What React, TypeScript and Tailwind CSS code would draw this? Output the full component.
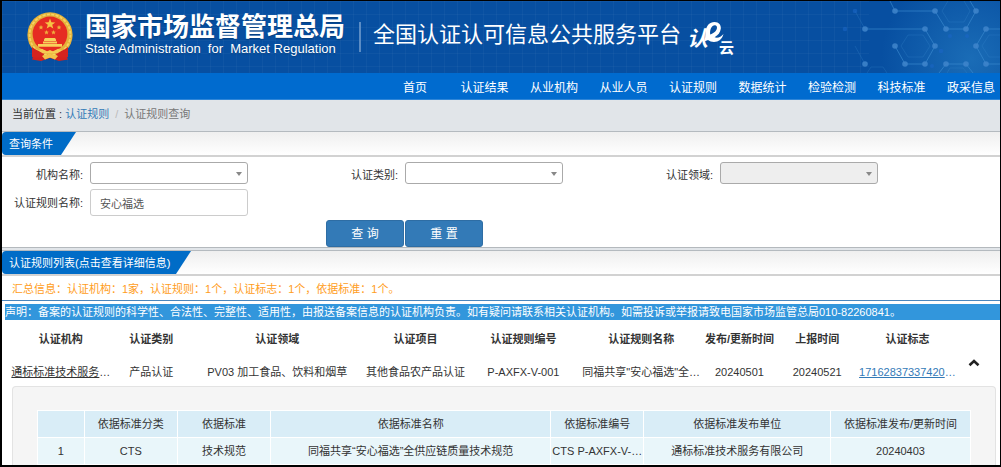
import React, { useState } from "react";

const NAV = ["首页", "认证结果", "从业机构", "从业人员", "认证规则", "数据统计", "检验检测", "科技标准", "政采信息"];

function Emblem() {
  return (
    <svg viewBox="0 0 46 50" className="h-[50px] w-[46px] shrink-0" role="img" aria-label="国徽">
      <path d="M6 31 C4 38 8 43 5 47.5 L14 49 L23 46 L32 49 L41 47.5 C38 43 42 38 40 31Z" fill="#d3211d" />
      <circle cx="23" cy="22.8" r="22.6" fill="#e5b13a" />
      <circle cx="23" cy="22.8" r="20.4" fill="none" stroke="#f6d362" strokeWidth="1.8" strokeDasharray="3 1.4" />
      <circle cx="23" cy="22" r="17.4" fill="#e62c22" />
      <path d="M23 6.5 L24.4 10.3 L28.3 10.4 L25.2 12.8 L26.3 16.6 L23 14.4 L19.7 16.6 L20.8 12.8 L17.7 10.4 L21.6 10.3Z" fill="#f6c445" />
      <g fill="#f0ae3c">
        <path d="M14 13l.7 1.6 1.6.1-1.2 1.1.4 1.7-1.5-.9-1.5.9.4-1.7-1.2-1.1 1.6-.1z" />
        <path d="M32 13l.7 1.6 1.6.1-1.2 1.1.4 1.7-1.5-.9-1.5.9.4-1.7-1.2-1.1 1.6-.1z" />
        <path d="M19.5 18l.7 1.6 1.6.1-1.2 1.1.4 1.7-1.5-.9-1.5.9.4-1.7-1.2-1.1 1.6-.1z" />
        <path d="M26.5 18l.7 1.6 1.6.1-1.2 1.1.4 1.7-1.5-.9-1.5.9.4-1.7-1.2-1.1 1.6-.1z" />
      </g>
      <path d="M17 27.5 L18 26 H28 L29 27.5 V29 H17Z M16 29.6 H30 V31.4 H16Z M11 32 H35 V34.8 H11Z" fill="#f8d25a" />
      <path d="M5 35 C10 39 14 40 18 40 C17 45 11 47 5 45Z M41 35 C36 39 32 40 28 40 C29 45 35 47 41 45Z" fill="#d5241f" />
      <path d="M11 38.5 L15 36.8 L20 39.5 L23 38 L26 39.5 L31 36.8 L35 38.5 L30 41.5 H16Z" fill="#f4cb52" />
      <path d="M15 44 L23 42 L31 44 L28 47.5 L23 45.5 L18 47.5Z" fill="#f2c24a" />
    </svg>
  );
}

function CloudLogo() {
  return (
    <svg viewBox="0 0 50 44" className="h-11 w-[50px] shrink-0" role="img" aria-label="认e云" fill="#fff">
      <text x="0" y="31" fontSize="21" fontWeight="700" fontStyle="italic" fontFamily="Noto Sans CJK SC">认</text>
      <path
        transform="translate(0 4)"
        fillRule="evenodd"
        d="M17 22.5 C18.5 19.5 18 17 18.5 13 C19.3 6.5 22.5 3 27.5 3 C32 3 34.2 6 33.8 9.8 C33.4 13.5 31 16.3 27.6 18.3 C30.5 19.3 34 18.3 36.5 15 C35.2 20.2 31.5 23 27 23 C24.6 23 22.6 22.2 21 21 C19.8 21.6 18.4 22.2 17 22.5Z M27.8 6.2 C24.6 6.5 22.6 10.2 23.2 15.6 C27 14.4 30 11.5 30 8.6 C30 7 29.2 6.1 27.8 6.2Z"
      />
      <text x="32" y="38" fontSize="15" fontWeight="700" fontFamily="Noto Sans CJK SC">云</text>
    </svg>
  );
}

const DOTS: [number, number][] = [
  [146, 10], [186, 10], [227, 10], [116, 28], [176, 28], [197, 28], [217, 28], [237, 28],
  [146, 45], [186, 45], [227, 45], [116, 63], [156, 63], [176, 63], [197, 63], [217, 63], [237, 63],
];

function HeaderArt() {
  return (
    <svg viewBox="0 0 251 72" className="absolute right-0 top-0 h-full w-[251px]" aria-hidden="true">
      <defs>
        <radialGradient id="glow" cx="222" cy="58" r="90" gradientUnits="userSpaceOnUse">
          <stop offset="0" stopColor="#2a84c8" stopOpacity=".55" />
          <stop offset="1" stopColor="#2a84c8" stopOpacity="0" />
        </radialGradient>
      </defs>
      <rect x="120" width="131" height="72" fill="#074fa1" />
      <rect width="251" height="72" fill="url(#glow)" />
      <g fill="none" stroke="#3a8ad0" strokeOpacity=".65">
        <path d="M141 0 L146 10 H186 L197 28 H217 L227 10 L221 0" />
        <path d="M116 28 H176 L186 45 L176 63 H156 L146 45" />
        <path d="M251 28 H237 L227 45 L237 63 H251 M190 72 L197 63 H217 L224 72" />
      </g>
      <g fill="none" stroke="#3a8ad0" strokeOpacity=".25">
        <path d="M106 10 L116 28 M106 45 L116 63 M159 34 H174 L181 45 L174 56 H159 L152 45Z M199 0 L193 10 L200 21 H215 L221 10 L215 0 M251 34 H240 L233 45 L240 56 H251 M118 72 L122 66 H134 L138 72 M198 72 L201 67 H214 L218 72" />
      </g>
      <g fill="#3f85cb" fillOpacity=".85">
        {DOTS.map(([x, y]) => <circle key={`${x}-${y}`} cx={x} cy={y} r="2.8" />)}
      </g>
      <g fill="#1b66c4" fillOpacity=".6">
        <circle cx="106" cy="10" r="2.3" /><circle cx="96" cy="28" r="2.3" /><circle cx="192" cy="50" r="2.3" />
        <circle cx="201" cy="35" r="2" /><circle cx="218" cy="35" r="2" /><circle cx="183" cy="65" r="2" />
      </g>
    </svg>
  );
}

function SectionBar({ title, tab }: { title: string; tab: string }) {
  return (
    <div className="border-b-2 border-[#d2d2d2] bg-linear-to-b from-[#efefef] to-white">
      <h2 className={`${tab} h-[23px] rounded-l bg-[#006cc7] pl-[7px] leading-6 text-white [clip-path:polygon(0_0,100%_0,calc(100%-15px)_100%,0_100%)]`}>
        {title}
      </h2>
    </div>
  );
}

function SelectField({ id, label, disabled }: { id: string; label: string; disabled?: boolean }) {
  return (
    <div className="flex items-center">
      <label htmlFor={id} className="w-[81px] shrink-0 pt-1 text-right">{label}</label>
      <div className="relative ml-[7px] w-1/2">
        <select id={id} disabled={disabled} className="block h-[22px] w-full appearance-none rounded-[3px] border border-[#aaa] bg-white disabled:bg-[#eee]">
          <option></option>
        </select>
        <svg viewBox="0 0 6 4" className="pointer-events-none absolute right-1.5 top-[10px] h-1 w-1.5" aria-hidden="true">
          <path d="M0 0H6L3 4Z" fill="#888" />
        </svg>
      </div>
    </div>
  );
}

const STD_HEAD: [string, string][] = [
  ["", "w-[5%]"], ["依据标准分类", "w-[10%]"], ["依据标准", "w-[10%]"], ["依据标准名称", "w-[30%]"],
  ["依据标准编号", "w-[10%]"], ["依据标准发布单位", "w-[20%]"], ["依据标准发布/更新时间", "w-[15%]"],
];
const STD_ROW = ["1", "CTS", "技术规范", "同福共享“安心福选”全供应链质量技术规范", "CTS P-AXFX-V-…", "通标标准技术服务有限公司", "20240403"];

const RULE_HEAD: [string, string][] = [
  ["认证机构", "w-[11.5%] pl-2"], ["认证类别", "w-[8.3%]"], ["认证领域", "w-[18.1%]"], ["认证项目", "w-[10.9%]"],
  ["认证规则编号", "w-[11.7%]"], ["认证规则名称", "w-[13%]"], ["发布/更新时间", "w-[7.6%]"],
  ["上报时间", "w-[8.7%]"], ["认证标志", "w-[10.2%]"],
];

export default function App() {
  const [name, setName] = useState("安心福选");
  const [open, setOpen] = useState(true);
  return (
    <div className="overflow-hidden border-2 border-r border-t border-black bg-white font-['Liberation_Sans','Noto_Sans_CJK_SC',sans-serif] text-[11px] leading-4 text-[#333]">
      <header className="relative bg-[#074fa1] bg-[linear-gradient(#ffffff08_1px,transparent_1px),linear-gradient(90deg,#ffffff08_1px,transparent_1px)] bg-size-[13px_13px] text-white">
        <HeaderArt />
        <div className="relative flex h-[72px] items-center pl-[25px]">
          <Emblem />
          <div className="ml-3 pb-1 text-shadow-sm">
            <div className="whitespace-nowrap text-[26px] font-bold leading-7">国家市场监督管理总局</div>
            <div className="whitespace-nowrap text-[13px] leading-4">State Administration&nbsp; for&nbsp; Market Regulation</div>
          </div>
          <div className="ml-3.5 h-[30px] w-0.5 bg-[#5b8cc4]" />
          <h1 className="ml-3 whitespace-nowrap pb-1 text-[22px] leading-8">全国认证认可信息公共服务平台</h1>
          <div className="ml-1.5"><CloudLogo /></div>
        </div>
      </header>

      <nav className="border-b border-[#2f86d8] bg-[#006bcf]">
        <ul className="ml-auto mr-[5px] flex h-[26px] w-[604px] items-center justify-between pt-[3px] text-xs text-white">
          {NAV.map((n) => (
            <li key={n} className="w-12 whitespace-nowrap text-center"><a href="#">{n}</a></li>
          ))}
        </ul>
      </nav>

      <div className="flex h-8 items-center border-b border-[#b4babf] bg-[#e1e5e9] pb-1 pl-2.5">
        <span>当前位置 :&nbsp;</span>
        <a href="#" className="text-[#337ab7]">认证规则</a>
        <span className="px-1.5 text-[#bbb]">/</span>
        <span className="text-[#777]">认证规则查询</span>
      </div>

      <SectionBar title="查询条件" tab="w-[74px]" />

      <form onSubmit={(e) => e.preventDefault()} className="border-b border-[#b4b9bd] pt-[5px]">
        <div className="grid w-[94.7%] grid-cols-3 gap-y-[5px]">
          <SelectField id="org" label="机构名称:" />
          <SelectField id="category" label="认证类别:" />
          <SelectField id="field" label="认证领域:" disabled />
          <div className="flex items-center">
            <label htmlFor="rule" className="w-[81px] shrink-0 text-right">认证规则名称:</label>
            <input id="rule" value={name} onChange={(e) => setName(e.target.value)} className="ml-[7px] h-[27px] w-1/2 rounded-[3px] border border-[#ccc] px-[9px] text-[#555]" />
          </div>
        </div>
        <div className="mt-1 flex gap-px pl-[324px] text-xs text-white">
          <button type="submit" className="h-[27px] w-[78px] rounded-[3px] border border-[#2e6da4] bg-[#337ab7]">查 询</button>
          <button type="button" onClick={() => setName("")} className="h-[27px] w-[78px] rounded-[3px] border border-[#2e6da4] bg-[#337ab7]">重 置</button>
        </div>
      </form>
      <div className="h-[3px] border-b border-[#b4babf] bg-[#e1e5e9]" />

      <SectionBar title="认证规则列表(点击查看详细信息)" tab="w-[189px]" />

      <p className="h-[25px] border-b border-[#4a86bd] pl-2.5 leading-[26px] text-[#ff9d22]">
        汇总信息：认证机构：1家，认证规则：1个，认证标志：1个，依据标准：1个。
      </p>
      <p className="ml-[3px] mt-[3px] whitespace-nowrap bg-[#3296dc] text-white">
        声明：备案的认证规则的科学性、合法性、完整性、适用性，由报送备案信息的认证机构负责。如有疑问请联系相关认证机构。如需投诉或举报请致电国家市场监管总局010-82260841。
      </p>

      <div className="flex items-center">
        <table className="w-[95.6%] table-fixed whitespace-nowrap text-center">
          <thead>
            <tr className="h-[38px]">
              {RULE_HEAD.map(([h, w]) => <th key={h} className={`${w} py-0 pr-0`}>{h}</th>)}
            </tr>
          </thead>
          <tbody>
            <tr className="h-7">
              <td className="pl-2 pr-0"><a href="#" className="underline">通标标准技术服务</a>…</td>
              <td>产品认证</td>
              <td>PV03 加工食品、饮料和烟草</td>
              <td>其他食品农产品认证</td>
              <td>P-AXFX-V-001</td>
              <td>同福共享"安心福选"全…</td>
              <td>20240501</td>
              <td>20240521</td>
              <td className="text-[#337ab7]"><a href="#" className="underline">17162837337420</a>…</td>
            </tr>
          </tbody>
        </table>
        <button type="button" aria-label="展开或收起" aria-expanded={open} onClick={() => setOpen(!open)} className="ml-3 mt-5">
          <svg viewBox="0 0 12 8" className={open ? "h-2 w-3" : "h-2 w-3 rotate-180"} aria-hidden="true">
            <path d="M1.5 6.2L6 2L10.5 6.2" fill="none" stroke="#222" strokeWidth="2.6" />
          </svg>
        </button>
      </div>

      {open && (
        <div className="ml-2.5 mr-1 rounded-t border border-b-0 border-[#e3e3e3] bg-[#f5f5f5] px-6 pt-[23px]">
          <table className="w-full table-fixed border-collapse whitespace-nowrap text-center text-[11px]">
            <thead>
              <tr className="h-[27px] bg-[#d9edf7]">
                {STD_HEAD.map(([h, w]) => <th key={w + h} className={`${w} border border-white p-0 font-normal`}>{h}</th>)}
              </tr>
            </thead>
            <tbody>
              <tr className="h-[27px] bg-[#e9f6fa]">
                {STD_ROW.map((c) => <td key={c} className="border border-white p-0">{c}</td>)}
              </tr>
            </tbody>
          </table>
        </div>
      )}
    </div>
  );
}
